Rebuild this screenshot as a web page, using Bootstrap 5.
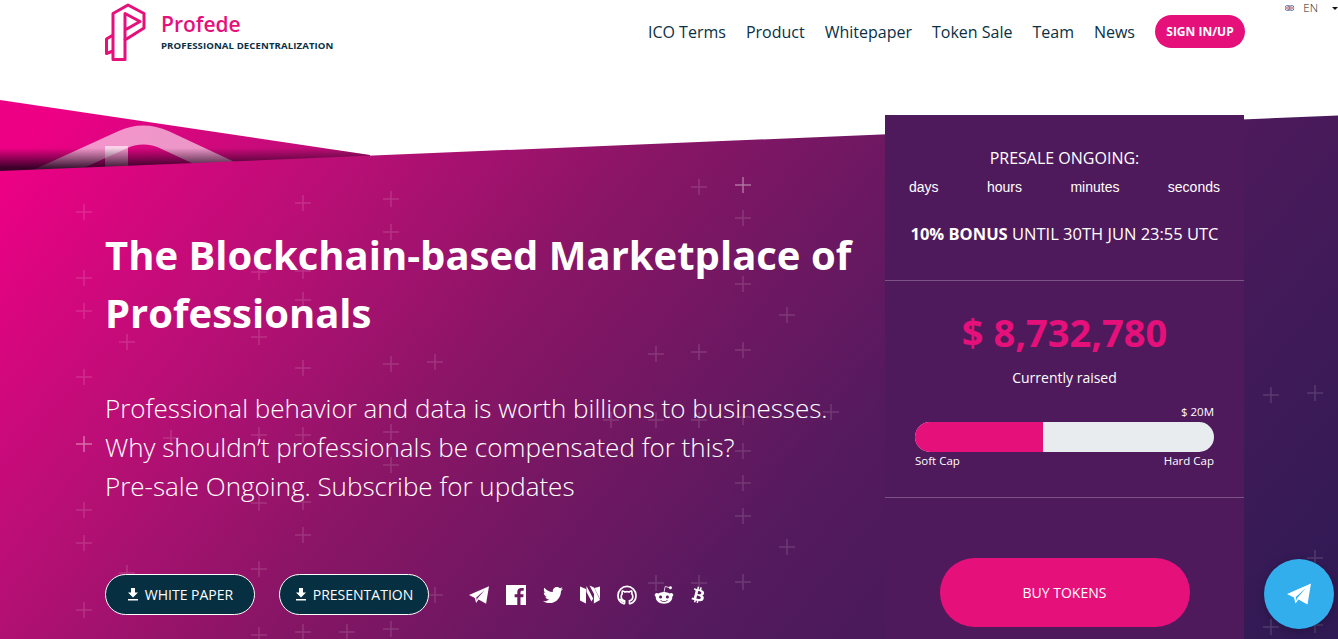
<!DOCTYPE html>
<html lang="en">
<head>
  <meta charset="UTF-8">
  <meta name="viewport" content="width=device-width, initial-scale=1.0">
  <title>Profede</title>
  <link href="https://cdn.jsdelivr.net/npm/bootstrap@5.3.0/dist/css/bootstrap.min.css" rel="stylesheet">
  <style>
    html, body { height: 100%; overflow: hidden; }
    body {
      font-family: "Open Sans", sans-serif;
      background: #fff;
      color: #0a3045;
      position: relative;
    }
    .hero-bg { position: absolute; left: 0; top: 0; width: 1338px; height: 639px; z-index: 0; }
    .page-wrap { position: relative; z-index: 1; }

    .top-bar { height: 63px; padding-left: 105px; margin-bottom: 52px; }
    .brand-box { gap: 15px; text-decoration: none; }
    .brand-name { font-size: 21px; font-weight: 600; line-height: 26px; color: #e6107b; }
    .brand-sub { font-size: 9.6px; font-weight: 700; line-height: 12px; color: #0a3045; letter-spacing: .1px; margin-top: 3px; }
    .main-menu { gap: 20px; }
    .main-menu .nav-link { padding: 0; font-size: 16px; color: #0a3045; }
    .sign-btn {
      width: 90px; height: 33px; padding: 0; margin-left: 0;
      font-size: 12px; font-weight: 700; line-height: 33px;
      background: #e6107b; color: #fff; border: 0; border-radius: 17px;
    }
    .lang-box { width: 53px; margin-left: 40px; height: 14px; margin-top: 1px; font-size: 11.5px; font-weight: 300; color: #222; gap: 9px; line-height: 14px; }
    .lang-box .dropdown-toggle::after { margin-left: 14px; vertical-align: 2px; color: #111; }

    .hero-row { padding-left: 105px; padding-right: 94px; }
    .hero-left { padding-top: 111px; width: 780px; }
    .hero-title { font-size: 40px; font-weight: 700; line-height: 58px; margin: 0 0 47px; color: #fff; }
    .hero-text { font-size: 26px; font-weight: 300; line-height: 39px; margin: 0 0 68px; color: #fff; }
    .paper-btn {
      width: 150px; height: 41px; padding: 0;
      display: inline-flex; align-items: center; justify-content: center; gap: 6px;
      background: #072f42; color: #fff; border: 1px solid #fff; border-radius: 21px;
      font-size: 14px;
    }
    .paper-btn:hover { background: #072f42; color: #fff; border-color: #fff; }
    .social-box { margin-left: 40px; gap: 17px; height: 20px; }
    .social-box svg { display: block; fill: #fff; }

    .sale-panel { width: 359px; height: 524px; background: #4f1a5c; color: #fff; flex-shrink: 0; }
    .sale-top { height: 166px; padding-top: 31px; border-bottom: 1px solid rgba(255,255,255,.25); }
    .sale-title { font-size: 16px; line-height: 24px; }
    .time-row { padding: 0 24px; margin-top: 9px; font-family: "Liberation Sans", Arial, sans-serif; font-size: 14px; line-height: 16px; }
    .bonus-line { font-size: 16.5px; line-height: 24px; margin-top: 27px; white-space: nowrap; }
    .sale-mid { height: 217px; padding: 0 30px; border-bottom: 1px solid rgba(255,255,255,.25); }
    .raised-sum { font-size: 38px; font-weight: 700; line-height: 52px; color: #e6107b; padding-top: 25px; }
    .raised-label { font-size: 14px; line-height: 20px; margin-top: 10px; }
    .cap-top { font-size: 11.5px; line-height: 14px; margin-top: 17px; margin-bottom: 3px; }
    .cap-bar { height: 30px; border-radius: 15px; background: #e9ecef; }
    .cap-bar .progress-bar { background: #e6107b; }
    .cap-labels { font-size: 11.5px; line-height: 16px; margin-top: 1px; }
    .buy-btn {
      display: block; width: 250px; height: 69px; margin: 60px auto 0; padding: 0;
      background: #e6107b; color: #fff; border: 0; border-radius: 35px; font-size: 14px;
    }
    .buy-btn:hover { background: #e6107b; color: #fff; }

    .tg-float {
      position: absolute; left: 1264px; top: 559px; z-index: 2;
      width: 70px; height: 70px; border-radius: 50%;
      background: #33aeed; box-shadow: 0 2px 8px rgba(0,0,0,.25);
    }
  </style>
</head>
<body>
  <!-- slanted hero background, drawn on its own canvas -->
  <svg class="hero-bg" viewBox="0 0 1338 639" aria-hidden="true">
    <defs>
      <linearGradient id="heroGrad" gradientUnits="userSpaceOnUse" x1="0" y1="170" x2="1024" y2="1021">
        <stop offset="0" stop-color="#ee0085"/>
        <stop offset=".2" stop-color="#b80f75"/>
        <stop offset=".365" stop-color="#8a1566"/>
        <stop offset=".62" stop-color="#551a5e"/>
        <stop offset="1" stop-color="#2e1a54"/>
      </linearGradient>
      <linearGradient id="wedgeShade" gradientUnits="userSpaceOnUse" x1="0" y1="148" x2="0" y2="168">
        <stop offset="0" stop-color="#1a0018" stop-opacity="0"/>
        <stop offset="1" stop-color="#1a0018" stop-opacity=".85"/>
      </linearGradient>
      <clipPath id="wedgeClip"><polygon points="0,100 370,155 370,175 0,175"/></clipPath>
    </defs>
    <g clip-path="url(#wedgeClip)">
      <rect x="0" y="100" width="370" height="75" fill="url(#heroGrad)"/>
      <g fill="none" stroke="#fff" stroke-opacity=".58" stroke-width="19">
        <path d="M30 182 L122 140 Q143 130 165 140 L255 182"/>
        <path d="M116.500 146 V180" stroke-width="23"/>
      </g>
      <rect x="0" y="146" width="370" height="30" fill="url(#wedgeShade)"/>
    </g>
    <polygon points="0,171 1338,115.500 1338,639 0,639" fill="url(#heroGrad)"/>
    <path stroke="#fff" stroke-opacity=".14" stroke-width="1.500" fill="none" d="M76 212h16M84 204v16M295 203h16M303 195v16M383 199h16M391 191v16M383 232h16M391 224v16M76 278h16M84 270v16M251 272h16M259 264v16M295 271h16M303 263v16M295 300h16M303 292v16M76 311h16M84 303v16M119 342h16M127 334v16M251 337h16M259 329v16M295 368h16M303 360v16M383 364h16M391 356v16M427 362h16M435 354v16M76 377h16M84 369v16M691 187h16M699 179v16M735 218h16M743 210v16M779 315h16M787 307v16M735 284h16M743 276v16M648 354h16M656 346v16M691 352h16M699 344v16M735 350h16M743 342v16M163 438h16M171 430v16M251 435h16M259 427v16M295 435h16M303 427v16M383 432h16M391 424v16M383 465h16M391 457v16M251 503h16M259 495v16M295 502h16M303 494v16M76 510h16M84 502v16M76 543h16M84 535v16M295 535h16M303 527v16M251 569h16M259 561v16M119 573h16M127 565v16M427 595h16M435 587v16M76 610h16M84 602v16M251 635h16M259 627v16M295 632h16M303 624v16M339 632h16M347 624v16M383 629h16M391 621v16M603 420h16M611 412v16M648 420h16M656 412v16M691 420h16M699 412v16M735 417h16M743 409v16M823 412h16M831 404v16M735 451h16M743 443v16M735 483h16M743 475v16M735 516h16M743 508v16M779 547h16M787 539v16M648 583h16M656 575v16M691 583h16M699 575v16M735 582h16M743 574v16M1263 395h16M1271 387v16M1307 393h16M1315 385v16M1307 558h16M1315 550v16M1263 627h16M1271 619v16M1307 625h16M1315 617v16"/>
    <path stroke="#fff" stroke-opacity=".4" stroke-width="1.500" fill="none" d="M735 185h16M743 177v16M76 444h16M84 436v16"/>
  </svg>

  <div class="page-wrap">
    <header class="top-bar d-flex align-items-center">
      <a class="brand-box d-flex align-items-center" href="#">
        <svg width="41" height="58" viewBox="0 0 41 58" fill="none" stroke="#e6107b" stroke-width="3" stroke-linejoin="round">
          <path d="M8 32 V10.500 L23 2 L39 10.500 V25 L20 37 V56.500 H8 V32 L1.500 36 V50.500 L8 48"/>
          <path d="M20 37 V10.500 L35 18.500 L20 27"/>
        </svg>
        <div>
          <div class="brand-name">Profede</div>
          <div class="brand-sub">PROFESSIONAL DECENTRALIZATION</div>
        </div>
      </a>
      <nav class="main-menu nav align-items-center ms-auto">
        <a class="nav-link" href="#">ICO Terms</a>
        <a class="nav-link" href="#">Product</a>
        <a class="nav-link" href="#">Whitepaper</a>
        <a class="nav-link" href="#">Token Sale</a>
        <a class="nav-link" href="#">Team</a>
        <a class="nav-link" href="#">News</a>
        <a class="btn sign-btn" href="#">SIGN IN/UP</a>
      </nav>
      <div class="lang-box d-flex align-items-center align-self-start">
        <svg width="14" height="8" viewBox="0 0 14 8">
          <rect width="14" height="8" fill="#3d4f8a"/>
          <path d="M0 0L14 8M14 0L0 8" stroke="#fff" stroke-width="1.500"/>
          <path d="M7 0V8M0 4H14" stroke="#fff" stroke-width="2.500"/>
          <path d="M7 0V8M0 4H14" stroke="#c8323c" stroke-width="1.200"/>
        </svg>
        <span class="dropdown-toggle">EN</span>
      </div>
    </header>

    <main class="hero-row d-flex justify-content-between">
      <div class="hero-left">
        <h1 class="hero-title">The Blockchain-based Marketplace of Professionals</h1>
        <p class="hero-text">Professional behavior and data is worth billions to businesses.<br>Why shouldn’t professionals be compensated for this?<br>Pre-sale Ongoing. Subscribe for updates</p>
        <div class="d-flex align-items-center">
          <a class="btn paper-btn" href="#">
            <svg width="12" height="13" viewBox="0 0 12 13" fill="#fff"><path d="M4 0H8V4.500H11L6 9.500L1 4.500H4Z"/><rect x="1" y="11" width="10" height="1.500"/></svg>
            WHITE PAPER
          </a>
          <a class="btn paper-btn ms-4" href="#">
            <svg width="12" height="13" viewBox="0 0 12 13" fill="#fff"><path d="M4 0H8V4.500H11L6 9.500L1 4.500H4Z"/><rect x="1" y="11" width="10" height="1.500"/></svg>
            PRESENTATION
          </a>
          <div class="social-box d-flex align-items-center">
            <svg width="20" height="20" viewBox="0 0 24 24"><path fill-rule="evenodd" d="M0 12 L24 1.500 L20.500 22.500 L11.500 17.500 L8.500 21.500 L7 15.500Z M8.800 15 L19 6 L10 16.300 L9.400 19Z"/></svg>
            <svg width="20" height="20" viewBox="0 0 20 20"><path d="M0 0H20V20H14.500V12.300H17.200L17.600 9.200H14.500V7.200C14.500 6.300 14.800 5.700 16 5.700H17.700V3C17.400 3 16.400 2.900 15.300 2.900 12.900 2.900 11.300 4.400 11.300 7V9.200H8.600V12.300H11.300V20H0Z"/></svg>
            <svg width="20" height="20" viewBox="0 0 512 512"><path d="M459.37 151.716c.325 4.548.325 9.097.325 13.645 0 138.72-105.583 298.558-298.558 298.558-59.452 0-114.68-17.219-161.137-47.106 8.447.974 16.568 1.299 25.34 1.299 49.055 0 94.213-16.568 130.274-44.832-46.132-.975-84.792-31.188-98.112-72.772 6.498.974 12.995 1.624 19.818 1.624 9.421 0 18.843-1.3 27.614-3.573-48.081-9.747-84.143-51.98-84.143-102.985v-1.299c13.969 7.797 30.214 12.67 47.431 13.319-28.264-18.843-46.781-51.005-46.781-87.391 0-19.492 5.197-37.36 14.294-52.954 51.655 63.675 129.3 105.258 216.365 109.807-1.624-7.797-2.599-15.918-2.599-24.04 0-57.828 46.782-104.934 104.934-104.934 30.213 0 57.502 12.67 76.67 33.137 23.715-4.548 46.456-13.32 66.599-25.34-7.798 24.366-24.366 44.833-46.132 57.827 21.117-2.273 41.584-8.122 60.426-16.243-14.292 20.791-32.161 39.308-52.628 54.253z"/></svg>
            <svg width="20" height="20" viewBox="0 0 20 20"><path d="M0 1.500 L6 4 V18.500 L0 15.500Z M6.500 1 L13.200 13.500 L11.500 16.500 L6.500 7Z M9.500 .5 L14 2.500 L20 15 L13.800 18.500 L14 9Z M14.500 3 L20 1.500 V14Z"/></svg>
            <svg width="20" height="20" viewBox="0 0 20 20" style="fill:none" stroke="#fff" stroke-width="1.700" stroke-linecap="round"><path d="M6.800 18.700 C3.300 17.500 1 14.200 1 10.400 A9 9 0 0 1 19 10.400 C19 14.200 16.700 17.500 13.200 18.700"/><path d="M7.500 18.500 V15.800 C5 15.300 4.200 13.600 4.200 11.500 4.200 10.300 4.600 9.500 5.200 8.800 5 8 5 7 5.400 6 6.400 6 7.300 6.500 8 7 9.300 6.600 10.700 6.600 12 7 12.700 6.500 13.600 6 14.600 6 15 7 15 8 14.800 8.800 15.400 9.500 15.800 10.300 15.800 11.500 15.800 13.600 15 15.300 12.500 15.800 V18.500"/><path d="M2.800 14.500 C4.500 14.800 4.800 16.800 7.400 16.500"/></svg>
            <svg width="20" height="20" viewBox="0 0 512 512"><path d="M440.3 203.5c-15 0-28.2 6.2-37.9 15.9-35.7-24.7-83.8-40.6-137.1-42.3L293 52.3l88.2 19.8c0 21.6 17.6 39.2 39.2 39.2 22 0 39.7-18.1 39.7-39.7s-17.6-39.7-39.7-39.7c-15.4 0-28.7 9.3-35.3 22l-97.4-21.6c-4.9-1.3-9.7 2.2-11 7.1L246.3 177c-52.9 2.2-100.5 18.1-136.3 42.8-9.7-10.1-23.4-16.3-38.4-16.3-55.6 0-73.8 74.6-22.9 100.1-1.8 7.9-2.6 16.3-2.6 24.7 0 83.8 94.4 151.7 210.3 151.7 116.4 0 210.8-67.9 210.8-151.7 0-8.4-.9-17.2-3.1-25.1 49.9-25.6 31.5-99.7-23.8-99.7zM129.4 308.9c0-22 17.6-39.7 39.7-39.7 21.6 0 39.2 17.6 39.2 39.7 0 21.6-17.6 39.2-39.2 39.2-22 .1-39.7-17.6-39.7-39.2zm214.3 93.5c-36.4 36.4-139.1 36.4-175.5 0-4-3.5-4-9.7 0-13.7 3.5-3.5 9.7-3.5 13.2 0 27.8 28.5 120 29 149 0 3.5-3.5 9.7-3.5 13.2 0 4.1 4 4.1 10.2.1 13.7zm-.8-54.2c-21.6 0-39.2-17.6-39.2-39.2 0-22 17.6-39.7 39.2-39.7 22 0 39.7 17.6 39.7 39.7-.1 21.5-17.7 39.2-39.7 39.2z"/></svg>
            <svg width="15" height="20" viewBox="0 0 384 512"><g transform="rotate(14 192 256) translate(40 50) scale(.8)"><path d="M310.204 242.638c27.73-14.18 45.377-39.39 41.28-81.3-5.358-57.351-52.458-76.573-114.85-81.929V0h-48.528v77.203c-12.605 0-25.525.315-38.444.63V0h-48.528v79.409c-17.842.539-38.622.276-97.37 0v51.678c38.314-.678 58.417-3.14 63.023 21.427v217.429c-2.925 19.492-18.524 16.685-53.255 16.071L3.765 443.68c88.481 0 97.37.315 97.37.315V512h48.528v-67.06c13.234.315 26.154.315 38.444.315V512h48.528v-68.005c81.299-4.412 135.647-24.894 142.895-101.467 5.671-61.446-23.32-88.862-69.326-99.89zM150.608 134.553c27.415 0 113.126-8.507 113.126 48.528 0 54.515-85.71 48.212-113.126 48.212v-96.74zm0 251.776V279.821c32.772 0 133.127-9.138 133.127 53.255-.001 60.186-100.355 53.253-133.127 53.253z"/></g></svg>
          </div>
        </div>
      </div>

      <aside class="sale-panel">
        <div class="sale-top text-center">
          <div class="sale-title">PRESALE ONGOING:</div>
          <div class="time-row d-flex justify-content-between">
            <span>days</span><span>hours</span><span>minutes</span><span>seconds</span>
          </div>
          <div class="bonus-line"><strong>10% BONUS</strong> UNTIL 30TH JUN 23:55 UTC</div>
        </div>
        <div class="sale-mid">
          <div class="raised-sum text-center">$ 8,732,780</div>
          <div class="raised-label text-center">Currently raised</div>
          <div class="cap-top text-end">$ 20M</div>
          <div class="progress cap-bar">
            <div class="progress-bar" style="width: 42.8%"></div>
          </div>
          <div class="cap-labels d-flex justify-content-between">
            <span>Soft Cap</span><span>Hard Cap</span>
          </div>
        </div>
        <a class="btn buy-btn d-flex align-items-center justify-content-center" href="#">BUY TOKENS</a>
      </aside>
    </main>
  </div>

  <a class="tg-float d-flex align-items-center justify-content-center" href="#">
    <svg width="26" height="24" viewBox="0 0 24 24" fill="#fff"><path fill-rule="evenodd" d="M0 12 L24 1.500 L20.500 22.500 L11.500 17.500 L8.500 21.500 L7 15.500Z M8.800 15 L19 6 L10 16.300 L9.400 19Z"/></svg>
  </a>
</body>
</html>
